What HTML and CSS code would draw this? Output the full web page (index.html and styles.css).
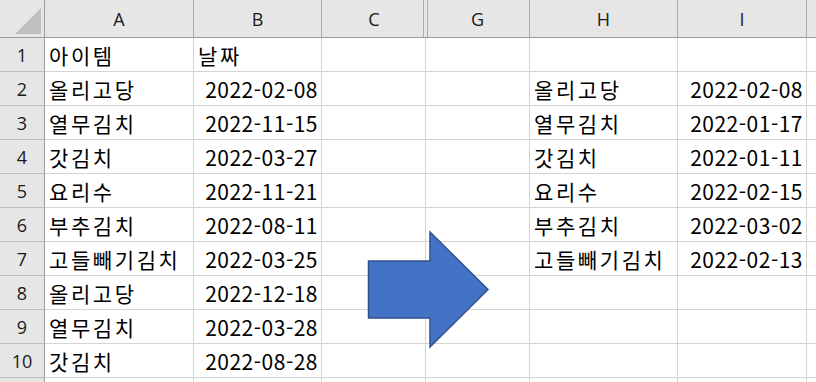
FILE: index.html
```html
<!DOCTYPE html>
<html lang="ko">
<head>
<meta charset="utf-8">
<title>Sheet</title>
<link rel="stylesheet" href="styles.css">
</head>
<body>
<div class="sheet">
  <div class="row head">
    <div class="c rh corner"><svg width="44" height="37" viewBox="0 0 44 37"><polygon points="15,34 41,8 41,34" fill="#bfbfbf"/></svg></div>
    <div class="c ca">A</div>
    <div class="c cb">B</div>
    <div class="c cc split-l">C</div>
    <div class="c cg split-r">G</div>
    <div class="c ch">H</div>
    <div class="c ci">I</div>
    <div class="c cj"></div>
  </div>
  <div class="row"><div class="c rh">1</div><div class="c ca">아이템</div><div class="c cb">날짜</div><div class="c cc"></div><div class="c cg"></div><div class="c ch"></div><div class="c ci"></div><div class="c cj"></div></div>
  <div class="row"><div class="c rh">2</div><div class="c ca">올리고당</div><div class="c cb num">2022-02-08</div><div class="c cc"></div><div class="c cg"></div><div class="c ch">올리고당</div><div class="c ci num">2022-02-08</div><div class="c cj"></div></div>
  <div class="row"><div class="c rh">3</div><div class="c ca">열무김치</div><div class="c cb num">2022-11-15</div><div class="c cc"></div><div class="c cg"></div><div class="c ch">열무김치</div><div class="c ci num">2022-01-17</div><div class="c cj"></div></div>
  <div class="row"><div class="c rh">4</div><div class="c ca">갓김치</div><div class="c cb num">2022-03-27</div><div class="c cc"></div><div class="c cg"></div><div class="c ch">갓김치</div><div class="c ci num">2022-01-11</div><div class="c cj"></div></div>
  <div class="row"><div class="c rh">5</div><div class="c ca">요리수</div><div class="c cb num">2022-11-21</div><div class="c cc"></div><div class="c cg"></div><div class="c ch">요리수</div><div class="c ci num">2022-02-15</div><div class="c cj"></div></div>
  <div class="row"><div class="c rh">6</div><div class="c ca">부추김치</div><div class="c cb num">2022-08-11</div><div class="c cc"></div><div class="c cg"></div><div class="c ch">부추김치</div><div class="c ci num">2022-03-02</div><div class="c cj"></div></div>
  <div class="row"><div class="c rh">7</div><div class="c ca">고들빼기김치</div><div class="c cb num">2022-03-25</div><div class="c cc"></div><div class="c cg"></div><div class="c ch">고들빼기김치</div><div class="c ci num">2022-02-13</div><div class="c cj"></div></div>
  <div class="row"><div class="c rh">8</div><div class="c ca">올리고당</div><div class="c cb num">2022-12-18</div><div class="c cc"></div><div class="c cg"></div><div class="c ch"></div><div class="c ci"></div><div class="c cj"></div></div>
  <div class="row"><div class="c rh">9</div><div class="c ca">열무김치</div><div class="c cb num">2022-03-28</div><div class="c cc"></div><div class="c cg"></div><div class="c ch"></div><div class="c ci"></div><div class="c cj"></div></div>
  <div class="row"><div class="c rh">10</div><div class="c ca">갓김치</div><div class="c cb num">2022-08-28</div><div class="c cc"></div><div class="c cg"></div><div class="c ch"></div><div class="c ci"></div><div class="c cj"></div></div>
  <div class="row"><div class="c rh"></div><div class="c ca"></div><div class="c cb"></div><div class="c cc"></div><div class="c cg"></div><div class="c ch"></div><div class="c ci"></div><div class="c cj"></div></div>
  <svg class="arrow" width="816" height="382" viewBox="0 0 816 382">
    <polygon points="368.5,261 430,261 430,232 488,289.5 430,347 430,318 368.5,318" fill="#4472c4" stroke="#2f528f" stroke-width="1.5" stroke-linejoin="miter"/>
  </svg>
</div>
</body>
</html>
```
FILE: styles.css
```css
html, body {
  margin: 0;
  padding: 0;
  background: #ffffff;
}
body {
  width: 816px;
  height: 382px;
  overflow: hidden;
  font-family: "Noto Sans CJK KR", "Noto Sans", sans-serif;
  color: #000000;
}
.sheet {
  position: relative;
  width: 816px;
  height: 382px;
  overflow: hidden;
}
.row {
  display: flex;
  height: 34px;
}
.c {
  box-sizing: border-box;
  height: 100%;
  border-right: 1px solid #d4d4d4;
  border-bottom: 1px solid #d4d4d4;
  display: flex;
  align-items: center;
  padding: 0 4px;
  font-size: 21px;
  letter-spacing: 2.6px;
  white-space: nowrap;
  overflow: hidden;
}
.rh {
  width: 45px;
  justify-content: center;
  padding: 0;
  background: #e6e6e6;
  border-right-color: #9e9e9e;
  border-bottom-color: #bdbdbd;
  font-family: "Open Sans", "Noto Sans", sans-serif;
  font-size: 18px;
  letter-spacing: 0;
  color: #1a1a1a;
}
.ca { width: 149px; }
.cb { width: 128px; }
.cc { width: 104px; }
.cg { width: 104px; }
.ch { width: 148px; }
.ci { width: 129px; }
.cj { flex: 1; border-right: none; }
.num { justify-content: flex-end; padding: 0 3px 0 0; letter-spacing: 0.5px; }

.head { height: 38px; }
.head .c {
  background: #e6e6e6;
  border-right-color: #ababab;
  border-bottom-color: #9c9c9c;
  justify-content: center;
  padding: 0;
  font-family: "Open Sans", "Noto Sans", sans-serif;
  font-size: 18px;
  letter-spacing: 0;
  color: #1a1a1a;
}
.head .corner { border-right-color: #9e9e9e; }
.head .corner svg { display: block; }
.head .split-l {
  border-right: none;
  background: linear-gradient(to left, #e6e6e6 2px, #ababab 2px, #ababab 3px, #e6e6e6 3px);
}
.head .split-r {
  background: linear-gradient(to right, #e6e6e6 1px, #ababab 1px, #ababab 2px, #e6e6e6 2px);
}
.arrow {
  position: absolute;
  left: 0;
  top: 0;
  pointer-events: none;
}
```
